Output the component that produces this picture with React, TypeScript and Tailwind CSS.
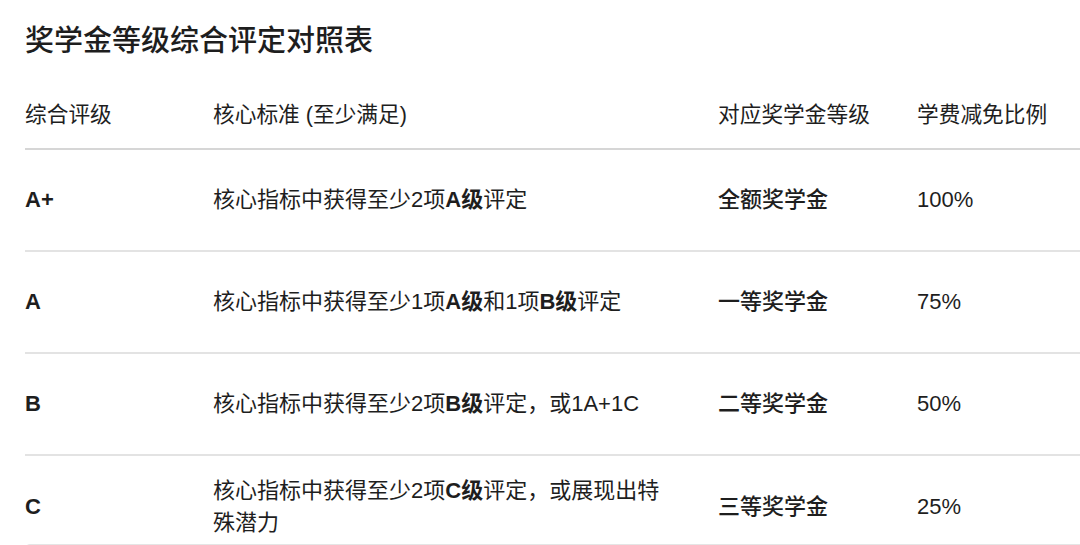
import React from "react";

type Row = {
  level: string;
  criteria: React.ReactNode;
  award: string;
  ratio: string;
};

const rows: Row[] = [
  {
    level: "A+",
    criteria: (
      <>
        核心指标中获得至少2项<b className="font-semibold">A级</b>评定
      </>
    ),
    award: "全额奖学金",
    ratio: "100%",
  },
  {
    level: "A",
    criteria: (
      <>
        核心指标中获得至少1项<b className="font-semibold">A级</b>和1项
        <b className="font-semibold">B级</b>评定
      </>
    ),
    award: "一等奖学金",
    ratio: "75%",
  },
  {
    level: "B",
    criteria: (
      <>
        核心指标中获得至少2项<b className="font-semibold">B级</b>评定，或1A+1C
      </>
    ),
    award: "二等奖学金",
    ratio: "50%",
  },
  {
    level: "C",
    criteria: (
      <>
        核心指标中获得至少2项<b className="font-semibold">C级</b>
        评定，或展现出特殊潜力
      </>
    ),
    award: "三等奖学金",
    ratio: "25%",
  },
];

const cols = "grid grid-cols-[188px_505px_199px_1fr]";

export default function App() {
  return (
    <div
      className="h-[545px] overflow-hidden bg-white pl-[25px] text-[#1e1e1e]"
      style={{ fontFamily: '"Liberation Sans", "Noto Sans CJK SC", sans-serif' }}
    >
      <h1 className="pt-[21px] text-[29px] font-medium leading-[40px]">
        奖学金等级综合评定对照表
      </h1>

      <div className="mt-[23px]">
        <div className={`${cols} h-[66px] items-center border-b-2 border-[#d6d6d6] pb-[2px] text-[21.7px]`}>
          <div>综合评级</div>
          <div>核心标准 (至少满足)</div>
          <div>对应奖学金等级</div>
          <div>学费减免比例</div>
        </div>

        {rows.map((r, i) => {
          const last = i === rows.length - 1;
          return (
            <div
              key={r.level}
              className={
                last
                  ? `${cols} h-[88px] items-center pt-[14px] text-[22px] leading-[32px]`
                  : `${cols} h-[102px] items-center border-b-2 border-[#e3e3e3] text-[22px] leading-[32px]`
              }
            >
              <div className="font-semibold">{r.level}</div>
              <div className="pr-[52px]">{r.criteria}</div>
              <div className="font-medium">{r.award}</div>
              <div>{r.ratio}</div>
            </div>
          );
        })}

        <div className="h-[10px] rounded-l-full bg-[#e5e5e5]" />
      </div>
    </div>
  );
}
